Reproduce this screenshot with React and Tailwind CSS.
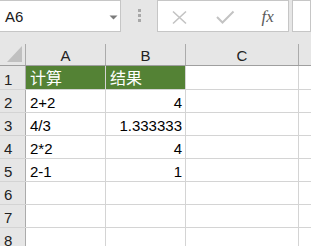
import React from "react";

const font = { fontFamily: "'Liberation Sans', 'Noto Sans CJK SC', sans-serif" };

function Cell({ children, w, align = "left", bg = "bg-white", text = "text-black", last = false }) {
  return (
    <div
      className={`${w} h-full shrink-0 border-r border-[#d4d4d4] ${bg} ${text} flex items-end overflow-visible whitespace-nowrap pb-[2px] ${align === "right" ? "justify-end pr-[3px]" : "pl-[4px]"}`}
    >
      {children}
    </div>
  );
}

const rows = [
  ["计算", "结果", true],
  ["2+2", "4"],
  ["4/3", "1.333333"],
  ["2*2", "4"],
  ["2-1", "1"],
  ["", ""],
  ["", ""],
  ["", ""],
];

export default function App() {
  return (
    <div className="w-[311px] h-[246px] overflow-hidden bg-[#e6e6e6] text-[15px] leading-none" style={font}>
      {/* toolbar */}
      <div className="flex h-[44px] items-start">
        <div className="relative w-[125px] h-[32px] bg-white border border-l-0 border-[#c6c6c6] flex items-center pl-[5px] text-[#1a1a1a] text-[15px]">
          A6
          <svg className="absolute left-[109px] top-[14px]" width="9" height="5" viewBox="0 0 9 5">
            <path d="M0.5 0.5 L8.5 0.5 L4.5 4.5 Z" fill="#7b7b7b" />
          </svg>
        </div>
        <div className="w-[38px] h-[32px] flex flex-col items-center pt-[9px] gap-[2px] pl-[1px]">
          <div className="w-[3px] h-[3px] bg-[#a8a8a8]" />
          <div className="w-[3px] h-[3px] bg-[#a8a8a8]" />
          <div className="w-[3px] h-[3px] bg-[#a8a8a8]" />
        </div>
        <div className="relative w-[136px] h-[32px] bg-white border border-[#c6c6c6]">
          <svg className="absolute left-[13px] top-[9px]" width="17" height="15" viewBox="0 0 17 15">
            <path d="M2 1.5 L15 13.5 M15 1.5 L2 13.5" stroke="#c3c3c3" strokeWidth="1.6" fill="none" />
          </svg>
          <svg className="absolute left-[58px] top-[9px]" width="19" height="15" viewBox="0 0 19 15">
            <path d="M1 7 L6.5 12.5 L17.5 1.5" stroke="#c3c3c3" strokeWidth="2" fill="none" />
          </svg>
          <span
            className="absolute left-[103px] top-[7px] text-[17px] italic text-[#5a5a5a]"
            style={{ fontFamily: "'Liberation Serif', serif" }}
          >
            fx
          </span>
        </div>
        <div className="ml-[3px] w-[20px] h-[32px] bg-white border border-[#c6c6c6]" />
      </div>

      {/* column header */}
      <div className="flex h-[22px] border-b border-[#9f9f9f] text-[#222]">
        <div className="relative w-[26px] shrink-0 h-full border-r border-[#ababab]">
          <svg className="absolute left-[7px] top-[2px]" width="16" height="16" viewBox="0 0 16 16">
            <path d="M15 0 L15 16 L0 16 Z" fill="#c0c0c0" />
          </svg>
        </div>
        <div className="w-[80px] shrink-0 h-full border-r border-[#ababab] flex items-end justify-center pb-[2px]">A</div>
        <div className="w-[80px] shrink-0 h-full border-r border-[#ababab] flex items-end justify-center pb-[2px]">B</div>
        <div className="w-[113px] shrink-0 h-full border-r border-[#ababab] flex items-end justify-center pb-[2px]">C</div>
        <div className="flex-1" />
      </div>

      {/* rows */}
      {rows.map((r, i) => {
        const header = r[2];
        return (
          <div key={i} className={`flex ${i === 0 ? "h-[24px]" : "h-[23px]"} border-b border-[#d4d4d4]`}>
            <div className="w-[26px] shrink-0 h-full border-r border-[#ababab] bg-[#e6e6e6] flex items-end pl-[4px] pb-[2px] text-[#222]">
              {i + 1}
            </div>
            {header ? (
              <>
                <Cell w="w-[80px]" bg="bg-[#548235]" text="text-white">
                  <span className="text-[16px]">{r[0]}</span>
                </Cell>
                <Cell w="w-[80px]" bg="bg-[#548235]" text="text-white">
                  <span className="text-[16px]">{r[1]}</span>
                </Cell>
              </>
            ) : (
              <>
                <Cell w="w-[80px]">{r[0]}</Cell>
                <Cell w="w-[80px]" align="right">{r[1]}</Cell>
              </>
            )}
            <Cell w="w-[113px]" />
            <div className="flex-1 bg-white" />
          </div>
        );
      })}
    </div>
  );
}
